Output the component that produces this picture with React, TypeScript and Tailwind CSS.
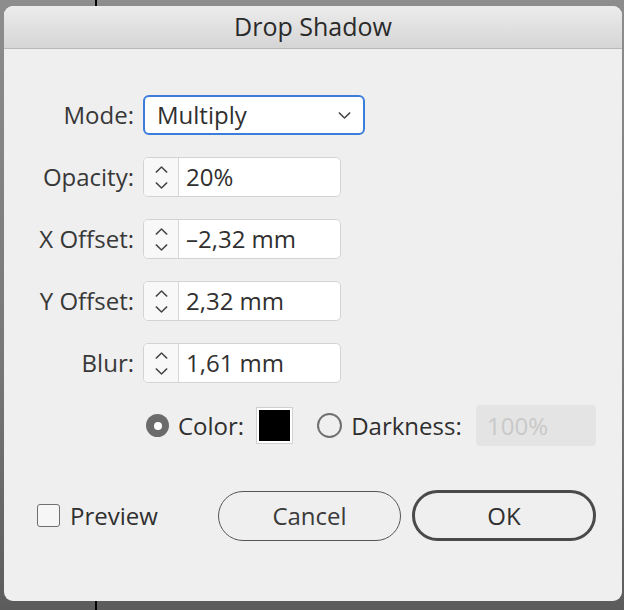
const font = { fontFamily: '"Open Sans", Lato, sans-serif' };

const Chevron = ({ up, className }: { up?: boolean; className?: string }) => (
  <svg viewBox="0 0 14 8" className={className} fill="none" stroke="#444" strokeWidth={1.6} strokeLinecap="round" strokeLinejoin="round">
    {up ? <path d="M1 7 7 1.2 13 7" /> : <path d="M1 1 7 6.8 13 1" />}
  </svg>
);

const SpinField = ({ value }: { value: string }) => (
  <div className="flex h-[40px] w-[198px] overflow-hidden rounded-[5px] border border-[#d3d3d3] bg-white">
    <div className="flex w-[35px] flex-col items-center justify-center gap-[9px] border-r border-[#d8d8d8] bg-[#f8f8f8]">
      <Chevron up className="h-[7px] w-[13px]" />
      <Chevron className="h-[7px] w-[13px]" />
    </div>
    <div className="flex items-center pl-[7px] text-[24px] text-[#303030]">{value}</div>
  </div>
);

const Row = ({ label, children }: { label: string; children: React.ReactNode }) => (
  <div className="flex items-center">
    <div className="w-[130px] text-right text-[24px] text-[#383838]">{label}</div>
    <div className="ml-[9px]">{children}</div>
  </div>
);

export default function App() {
  return (
    <div className="flex h-[610px] w-[624px] flex-col overflow-hidden bg-[linear-gradient(180deg,#8d8d8d_0%,#777_60%,#5c5c5c_100%)]" style={font}>
      <div className="h-[6px] shrink-0">
        <div className="ml-[95px] h-full w-[2px] bg-black" />
      </div>
      <div className="ml-[4px] flex h-[595px] w-[618px] shrink-0 flex-col overflow-hidden rounded-[9px] bg-[#efefef]">
        <div className="flex h-[43px] shrink-0 items-center justify-center border-b border-[#b9b9b9] bg-[linear-gradient(180deg,#ececec,#d5d5d5)] text-[25px] text-[#2a2a2a]">
          Drop Shadow
        </div>
        <div className="flex flex-col gap-[22px] pt-[46px]">
          <Row label="Mode:">
            <div className="flex h-[40px] w-[222px] items-center justify-between rounded-[6px] border-2 border-[#3b7ddb] bg-white pl-[12px] pr-[12px] text-[24px] text-[#303030]">
              <span>Multiply</span>
              <Chevron className="h-[7px] w-[13px]" />
            </div>
          </Row>
          <Row label="Opacity:">
            <SpinField value="20%" />
          </Row>
          <Row label="X Offset:">
            <SpinField value="–2,32 mm" />
          </Row>
          <Row label="Y Offset:">
            <SpinField value="2,32 mm" />
          </Row>
          <Row label="Blur:">
            <SpinField value="1,61 mm" />
          </Row>
          <div className="ml-[142px] flex h-[41px] w-[450px] items-center">
            <div className="flex h-[23px] w-[23px] items-center justify-center rounded-full bg-[#6b6b6b]">
              <div className="h-[8px] w-[8px] rounded-full bg-white" />
            </div>
            <span className="ml-[9px] text-[24px] text-[#303030]">Color:</span>
            <div className="ml-[12px] flex h-[37px] w-[37px] items-center justify-center border border-[#d0d0d0] bg-white">
              <div className="h-[31px] w-[31px] bg-black" />
            </div>
            <div className="ml-[24px] h-[25px] w-[25px] rounded-full border-2 border-[#707070]" />
            <span className="ml-[9px] text-[24px] text-[#303030]">Darkness:</span>
            <div className="ml-auto flex h-[41px] w-[120px] items-center rounded-[4px] bg-[#e4e4e4] pl-[11px] text-[24px] text-[#c9c9c9]">
              100%
            </div>
          </div>
          <div className="mt-[22px] flex items-center pr-[26px]">
            <div className="ml-[33px] h-[23px] w-[23px] rounded-[3px] border-[1.5px] border-[#6f6f6f] bg-[#f6f6f6]" />
            <span className="ml-[10px] text-[24px] text-[#303030]">Preview</span>
            <button className="ml-auto flex h-[50px] w-[183px] items-center justify-center rounded-full border border-[#555] text-[24px] text-[#3a3a3a]">
              Cancel
            </button>
            <button className="ml-[11px] flex h-[51px] w-[184px] items-center justify-center rounded-full border-[3px] border-[#4a4a4a] text-[24px] text-[#303030]">
              OK
            </button>
          </div>
        </div>
      </div>
      <div className="flex-1">
        <div className="ml-[95px] h-full w-[2px] bg-black" />
      </div>
    </div>
  );
}
